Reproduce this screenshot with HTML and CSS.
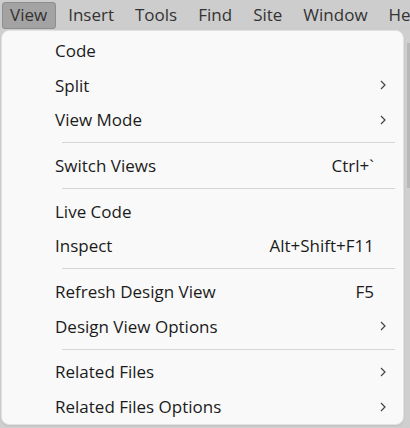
FILE: index.html
```html
<!DOCTYPE html>
<html>
<head>
<meta charset="utf-8">
<link rel="stylesheet" href="styles.css">
</head>
<body>
<div class="app">
  <div class="menubar">
    <span class="mb-item active">View</span>
    <span class="mb-item">Insert</span>
    <span class="mb-item">Tools</span>
    <span class="mb-item">Find</span>
    <span class="mb-item">Site</span>
    <span class="mb-item">Window</span>
    <span class="mb-item">Help</span>
  </div>
  <div class="stage">
    <div class="menu">
      <div class="item"><span class="label">Code</span></div>
      <div class="item"><span class="label">Split</span><svg class="chev" viewBox="0 0 6 10"><path d="M1 1 L5 5 L1 9" /></svg></div>
      <div class="item"><span class="label">View Mode</span><svg class="chev" viewBox="0 0 6 10"><path d="M1 1 L5 5 L1 9" /></svg></div>
      <div class="sep"></div>
      <div class="item"><span class="label">Switch Views</span><span class="key">Ctrl+`</span></div>
      <div class="sep"></div>
      <div class="item"><span class="label">Live Code</span></div>
      <div class="item"><span class="label">Inspect</span><span class="key">Alt+Shift+F11</span></div>
      <div class="sep"></div>
      <div class="item"><span class="label">Refresh Design View</span><span class="key">F5</span></div>
      <div class="item"><span class="label">Design View Options</span><svg class="chev" viewBox="0 0 6 10"><path d="M1 1 L5 5 L1 9" /></svg></div>
      <div class="sep"></div>
      <div class="item"><span class="label">Related Files</span><svg class="chev" viewBox="0 0 6 10"><path d="M1 1 L5 5 L1 9" /></svg></div>
      <div class="item"><span class="label">Related Files Options</span><svg class="chev" viewBox="0 0 6 10"><path d="M1 1 L5 5 L1 9" /></svg></div>
    </div>
    <div class="edge">
      <div class="strip"></div>
    </div>
  </div>
</div>
</body>
</html>
```

FILE: styles.css
```css
html, body {
  margin: 0;
  padding: 0;
}
body {
  width: 410px;
  height: 428px;
  overflow: hidden;
  background: #cfcfcf;
  font-family: "Open Sans", "Noto Sans", sans-serif;
  color: #1a1a1a;
}
.app {
  display: flex;
  flex-direction: column;
}
.menubar {
  height: 30px;
  display: flex;
  align-items: center;
  padding-left: 2px;
  background: #cdcdcd;
  white-space: nowrap;
  overflow: hidden;
}
.mb-item {
  font-size: 17px;
  color: #333;
  padding: 1px 8px 2px 7px;
  margin-right: 4px;
  line-height: 22px;
  border: 1px solid transparent;
  border-radius: 3px;
}
.mb-item.active {
  background: #a3a3a3;
  border-color: #8d8d8d;
}
.stage {
  display: flex;
  height: 398px;
}
.menu {
  width: 403px;
  margin-left: 1px;
  height: 395px;
  background: #f9f9f9;
  border: 1px solid #e2e2e2;
  border-radius: 8px;
  box-sizing: border-box;
  padding-top: 2px;
  display: flex;
  flex-direction: column;
  box-shadow: 0 1px 2px rgba(0,0,0,0.08);
}
.item {
  height: 35px;
  display: flex;
  align-items: center;
  padding-left: 53px;
  padding-right: 17px;
  font-size: 17px;
  color: #1b1b1b;
}
.label {
  flex: 1;
}
.key {
  margin-right: 12px;
}
.chev {
  width: 6px;
  height: 10px;
  fill: none;
  stroke: #444;
  stroke-width: 1.2;
  margin-right: 0;
}
.sep {
  height: 1px;
  background: #d6d6d6;
  margin: 5px 8px 5px 60px;
}
.edge {
  flex: 1;
  padding-top: 13px;
}
.strip {
  width: 3px;
  margin-left: 3px;
  height: 145px;
  background: #b8b8b8;
}
```
